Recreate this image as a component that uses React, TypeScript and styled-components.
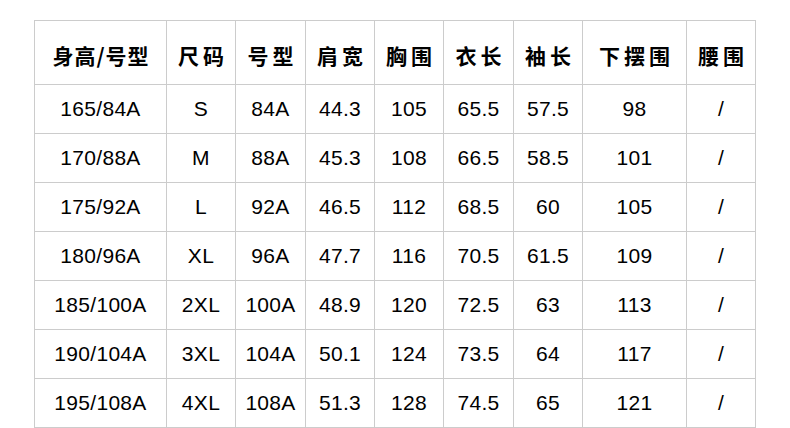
import { FC } from 'react'
import styled, { createGlobalStyle } from 'styled-components'

const GlobalStyle = createGlobalStyle`
	html, body {
		margin: 0;
		padding: 0;
		background: #ffffff;
	}
`

const Page = styled.div`
	padding: 20px 0 0 34px;
	width: 790px;
	height: 428px;
	box-sizing: border-box;
	overflow: hidden;
`

const Grid = styled.div`
	display: inline-grid;
	grid-template-columns: 131px 68px 69px 68px 68px 69px 68px 103px 68px;
	grid-template-rows: 63px repeat(7, 48px);
	gap: 1px;
	padding: 1px;
	background: #cccccc;
`

const Cell = styled.div`
	background: #ffffff;
	display: flex;
	align-items: center;
	justify-content: center;
	color: #000000;
	white-space: nowrap;
	font-family: 'Liberation Sans', 'Noto Sans', sans-serif;
	font-size: 21px;
	letter-spacing: 0.3px;
`

const HeadCell = styled(Cell)<{ $spacing: number }>`
	font-family: 'Noto Sans CJK SC', 'Noto Sans', sans-serif;
	font-weight: 700;
	letter-spacing: ${(p) => p.$spacing}px;
	padding-top: 4px;
	padding-left: ${(p) => p.$spacing}px;
	box-sizing: border-box;
`

const headers = ['身高/号型', '尺码', '号型', '肩宽', '胸围', '衣长', '袖长', '下摆围', '腰围']

const rows = [
	['165/84A', 'S', '84A', '44.3', '105', '65.5', '57.5', '98', '/'],
	['170/88A', 'M', '88A', '45.3', '108', '66.5', '58.5', '101', '/'],
	['175/92A', 'L', '92A', '46.5', '112', '68.5', '60', '105', '/'],
	['180/96A', 'XL', '96A', '47.7', '116', '70.5', '61.5', '109', '/'],
	['185/100A', '2XL', '100A', '48.9', '120', '72.5', '63', '113', '/'],
	['190/104A', '3XL', '104A', '50.1', '124', '73.5', '64', '117', '/'],
	['195/108A', '4XL', '108A', '51.3', '128', '74.5', '65', '121', '/'],
]

const SizeTable: FC = () => (
	<Grid>
		{headers.map((h, i) => (
			<HeadCell $spacing={i === 0 ? 1 : 4} key={h}>
				{h}
			</HeadCell>
		))}
		{rows.map((row, i) =>
			row.map((v, j) => <Cell key={`${i}-${j}`}>{v}</Cell>)
		)}
	</Grid>
)

const App: FC = () => (
	<Page>
		<GlobalStyle />
		<SizeTable />
	</Page>
)

export default App
